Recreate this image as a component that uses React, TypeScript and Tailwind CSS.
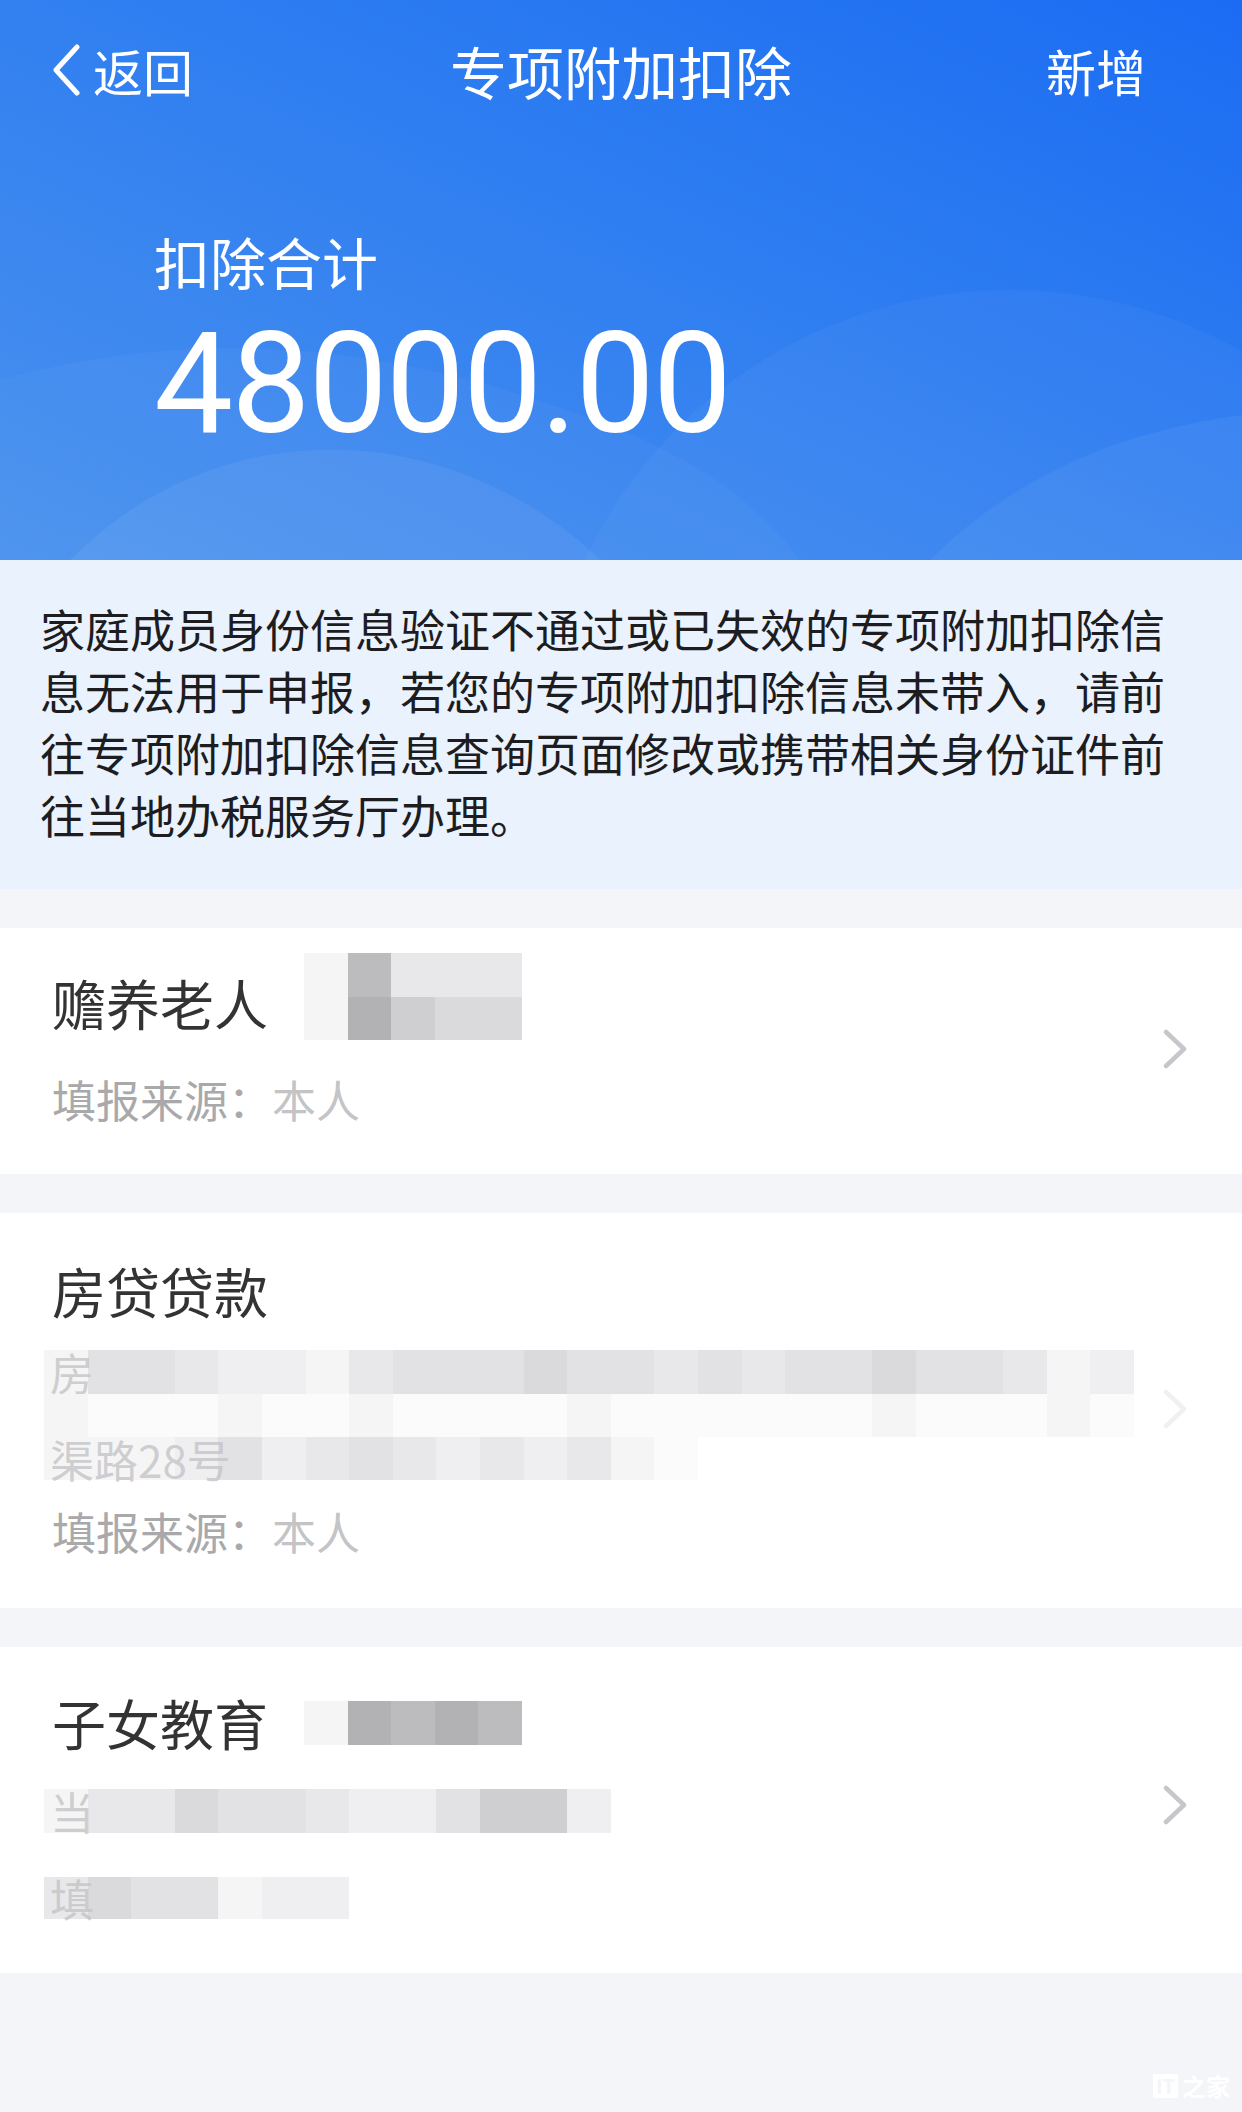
import React from 'react';

// shades used by the pixelated (mosaic) privacy blocks
const SHADE: Record<string, string> = {
  w: 'bg-[#fbfbfb]',
  a: 'bg-[#f5f5f6]',
  b: 'bg-[#efeff1]',
  c: 'bg-[#e8e8ea]',
  d: 'bg-[#e2e2e4]',
  e: 'bg-[#dadadc]',
  f: 'bg-[#cfcfd1]',
  g: 'bg-[#bcbcbe]',
  h: 'bg-[#b2b2b4]',
};

function Mosaic({ rows, className = '', cellH = 'h-[43.5px]' }: { rows: string[]; className?: string; cellH?: string }) {
  return (
    <div className={`flex flex-col blur-[0.6px] ${className}`}>
      {rows.map((row, i) => (
        <div key={i} className="flex">
          {row.split('').map((k, j) => (
            <div key={j} className={`w-[43.6px] ${cellH} ${SHADE[k]}`} />
          ))}
        </div>
      ))}
    </div>
  );
}

function BlurLine({ row, text, className = '', cellH = 'h-[43.5px]' }: { row: string; text: string; className?: string; cellH?: string }) {
  return (
    <div className={`relative ${className}`}>
      <Mosaic rows={[row]} cellH={cellH} />
      <span className="absolute left-[6px] top-1/2 -translate-y-1/2 text-[44px] leading-none text-[#c4c4c6]/80">{text}</span>
    </div>
  );
}

function Chevron({ faded = false }: { faded?: boolean }) {
  return (
    <svg width="24" height="40" viewBox="0 0 24 40" className={`shrink-0 ${faded ? 'opacity-25' : ''}`}>
      <path d="M3 3 L21 20 L3 37" fill="none" stroke="#c6c6cb" strokeWidth="4.5" strokeLinecap="round" strokeLinejoin="round" />
    </svg>
  );
}

function Card({ children, className = '', faded = false }: { children: React.ReactNode; className?: string; faded?: boolean }) {
  return (
    <div className={`bg-white flex items-center pl-[52px] pr-[55px] ${className}`}>
      <div className="flex-1 min-w-0">{children}</div>
      <Chevron faded={faded} />
    </div>
  );
}

function Source() {
  return (
    <div className="text-[44px] leading-[56px] text-[#a9a9ab]">
      填报来源：<span className="text-[#c4c4c6]">本人</span>
    </div>
  );
}

export default function App() {
  return (
    <div className="w-[1242px] min-h-[2112px] flex flex-col bg-[#f4f5f9] font-['Noto_Sans_CJK_SC','Noto_Sans',sans-serif]">
      {/* header */}
      <div className="relative h-[560px] overflow-hidden bg-[linear-gradient(205deg,#1b6cf3_0%,#2f7ef1_45%,#4a92ee_100%)] text-white">
        <svg className="absolute inset-0" width="1242" height="560" viewBox="0 0 1242 560">
          <circle cx="1010" cy="760" r="470" fill="#ffffff" fillOpacity="0.035" />
          <path d="M0 380 C220 320 420 350 620 430 C700 462 760 505 800 560 L0 560 Z" fill="#ffffff" fillOpacity="0.03" />
          <path d="M70 560 C150 480 250 445 350 450 C460 456 550 510 600 560 Z" fill="#ffffff" fillOpacity="0.06" />
          <path d="M930 560 C1020 470 1130 430 1242 415 L1242 560 Z" fill="#ffffff" fillOpacity="0.05" />
        </svg>

        <div className="relative grid grid-cols-[1fr_auto_1fr] items-center h-[140px]">
          <div className="flex items-center pl-[51px]">
            <svg width="30" height="52" viewBox="0 0 30 52">
              <path d="M26 3 L5 26 L26 49" fill="none" stroke="#ffffff" strokeWidth="5" strokeLinecap="round" strokeLinejoin="round" />
            </svg>
            <span className="ml-[12px] text-[50px] leading-none">返回</span>
          </div>
          <div className="text-[57px] leading-none">专项附加扣除</div>
          <div className="flex justify-end pr-[96px] text-[50px] leading-none">新增</div>
        </div>

        <div className="relative pl-[154px]">
          <div className="mt-[93px] text-[56px] leading-none">扣除合计</div>
          <div className="mt-[24px] font-['Roboto','Noto_Sans',sans-serif] text-[141px] leading-none tracking-[-2px]">48000.00</div>
        </div>
      </div>

      {/* notice */}
      <div className="bg-[#eaf2fd] px-[40px] pt-[38px] pb-[43px] text-[45px] leading-[62px] text-[#1d1d1f]">
        <div className="whitespace-nowrap">家庭成员身份信息验证不通过或已失效的专项附加扣除信</div>
        <div className="whitespace-nowrap">息无法用于申报，若您的专项附加扣除信息未带入，请前</div>
        <div className="whitespace-nowrap">往专项附加扣除信息查询页面修改或携带相关身份证件前</div>
        <div className="whitespace-nowrap">往当地办税服务厅办理。</div>
      </div>

      {/* list */}
      <div className="flex flex-col gap-[39px] mt-[39px]">
        <Card className="pt-[43px] pb-[47px]">
          <div className="flex items-start">
            <span className="text-[54px] leading-[64px] text-[#333333]">赡养老人</span>
            <Mosaic className="ml-[36px] -mt-[18px]" rows={['agccc', 'ahfee']} />
          </div>
          <div className="mt-[31px]">
            <Source />
          </div>
        </Card>

        <Card className="pt-[46px] pb-[49px]" faded>
          <span className="block text-[54px] leading-[64px] text-[#333333]">房贷贷款</span>
          <div className="mt-[27px] -ml-[8px]">
            <BlurLine row="addcbbacdddeddcdcddeddcab" text="房" />
            <Mosaic rows={['awwwawwawwwwawwwwwwawwwaw']} />
            <BlurLine row="aaabdbcdcbcbcaw" text="渠路28号" cellH="h-[43px]" />
          </div>
          <div className="mt-[23px]">
            <Source />
          </div>
        </Card>

        <Card className="pt-[44px] pb-[54px]">
          <div className="flex items-center h-[64px]">
            <span className="text-[54px] leading-[64px] text-[#333333]">子女教育</span>
            <Mosaic className="ml-[36px]" rows={['ahghg']} />
          </div>
          <BlurLine className="mt-[34px] -ml-[8px]" row="acceddcbbdffb" text="当" cellH="h-[44px]" />
          <BlurLine className="mt-[44px] -ml-[8px]" row="ceddabb" text="填" cellH="h-[42px]" />
        </Card>
      </div>

      {/* watermark */}
      <div className="flex-1 flex items-end justify-end pr-[12px] pb-[14px]">
        <div className="flex items-center gap-[4px] text-white">
          <span className="bg-white text-[#f4f5f9] text-[20px] font-bold leading-none px-[3px] py-[2px]">IT</span>
          <span className="text-[24px] font-bold leading-none">之家</span>
        </div>
      </div>
    </div>
  );
}
